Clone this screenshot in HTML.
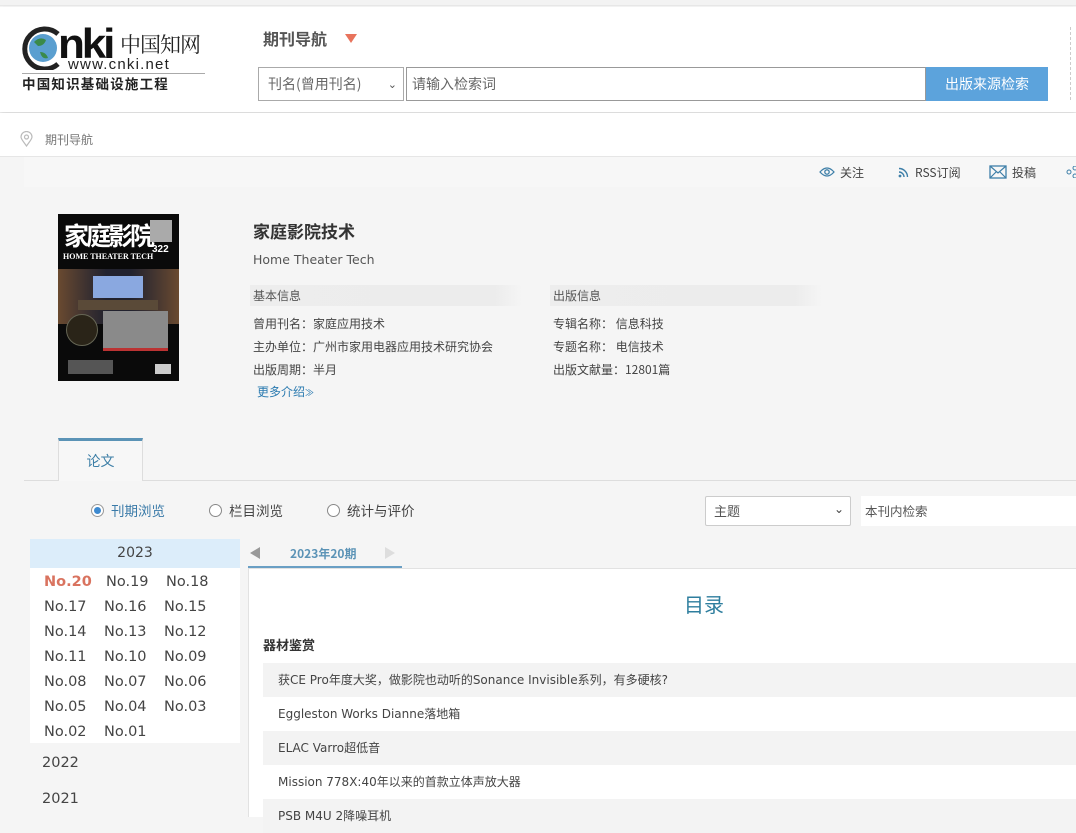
<!DOCTYPE html>
<html><head><meta charset="utf-8"><style>
*{margin:0;padding:0;box-sizing:border-box}
body{width:1076px;height:817px;overflow:hidden;background:#f5f5f5;font-family:"Liberation Sans","Noto Sans CJK SC",sans-serif;color:#333;position:relative}
.a{position:absolute;white-space:nowrap}
</style></head><body>
<!-- header -->
<div class="a" style="left:0;top:0;width:1076px;height:6px;background:#f3f3f3;border-bottom:1px solid #e8e8e8"></div>
<div class="a" style="left:0;top:7px;width:1076px;height:105px;background:#fff;box-shadow:0 3px 5px rgba(0,0,0,.12)"></div>
<!-- logo -->
<svg class="a" style="left:22px;top:26px" width="40" height="44" viewBox="0 0 40 44">
<path d="M36 8 A20 20 0 1 0 36 38" fill="none" stroke="#222" stroke-width="5"/>
<circle cx="21" cy="22" r="14" fill="#5a9fd0"/>
<path d="M12 16 q6-6 12-2 q-2 6 -8 6z M18 26 q6 0 8 6 q-6 2 -8 -6z" fill="#3a8a4a"/>
</svg>
<div class="a" style="left:58px;top:24px;font:bold 42px/40px 'Liberation Sans',sans-serif;color:#111;letter-spacing:-3px;transform:scaleX(1.05);transform-origin:left">nki</div>
<div class="a" style="left:120px;top:31px;font:21px/26px 'Noto Serif CJK SC',serif;color:#222;letter-spacing:-1px">中国知网</div>
<div class="a" style="left:68px;top:57px;font:15px/16px 'Liberation Sans',sans-serif;color:#222;letter-spacing:1.2px">www.cnki.net</div>
<div class="a" style="left:22px;top:73px;width:183px;border-top:1px solid #aaa"></div>
<div class="a" style="left:22px;top:75px;font:bold 13.5px/16px 'Noto Sans CJK SC',sans-serif;color:#222;letter-spacing:1.2px">中国知识基础设施工程</div>
<!-- nav -->
<div class="a" style="left:263px;top:27px;font:bold 16px/22px 'Noto Sans CJK SC',sans-serif;color:#555">期刊导航</div>
<div class="a" style="left:345px;top:34px;width:0;height:0;border-left:6px solid transparent;border-right:6px solid transparent;border-top:9px solid #e8735c"></div>
<div class="a" style="left:258px;top:67px;width:146px;height:34px;border:1px solid #aaa;background:#fff;font:14px/32px 'Noto Sans CJK SC',sans-serif;color:#666;padding-left:9px">刊名(曾用刊名)<span style="position:absolute;right:6px;top:0;font-size:11px;color:#555">&#8964;</span></div>
<div class="a" style="left:406px;top:67px;width:520px;height:34px;border:1px solid #999;background:#fff;font:14px/32px 'Noto Sans CJK SC',sans-serif;color:#666;padding-left:5px">请输入检索词</div>
<div class="a" style="left:926px;top:67px;width:122px;height:34px;background:#5ca3dc;font:14px/34px 'Noto Sans CJK SC',sans-serif;color:#fff;text-align:center">出版来源检索</div>
<div class="a" style="left:1070px;top:27px;height:73px;border-left:1px dashed #ccc"></div>
<!-- breadcrumb -->
<div class="a" style="left:0;top:113px;width:1076px;height:44px;background:#fff"></div>
<svg class="a" style="left:20px;top:131px" width="13" height="16" viewBox="0 0 13 16"><path d="M6.5 15 C3 10 1 8 1 6 A5.5 5.5 0 0 1 12 6 C12 8 10 10 6.5 15z" fill="none" stroke="#bbb" stroke-width="1.2"/><circle cx="6.5" cy="6" r="2" fill="none" stroke="#bbb" stroke-width="1.2"/></svg>
<div class="a" style="left:45px;top:131px;font:12px/17px 'Noto Sans CJK SC',sans-serif;color:#777">期刊导航</div>
<div class="a" style="left:0;top:156px;width:1076px;height:1px;background:#e6e6e6"></div>
<!-- toolbar -->
<div class="a" style="left:24px;top:157px;width:1052px;height:30px;background:#f7f7f7"></div>
<svg class="a" style="left:819px;top:166px" width="16" height="12" viewBox="0 0 16 12"><path d="M1 6 Q8 -2 15 6 Q8 14 1 6z" fill="none" stroke="#3e7fa8" stroke-width="1.3"/><circle cx="8" cy="6" r="2.2" fill="none" stroke="#3e7fa8" stroke-width="1.3"/></svg>
<div class="a" style="left:840px;top:164px;font:12px/17px 'Noto Sans CJK SC',sans-serif;color:#444">关注</div>
<svg class="a" style="left:898px;top:167px" width="11" height="11" viewBox="0 0 11 11"><circle cx="2" cy="9" r="1.4" fill="#3e7fa8"/><path d="M1 5 A5 5 0 0 1 6 10 M1 1.5 A8.5 8.5 0 0 1 9.5 10" fill="none" stroke="#3e7fa8" stroke-width="1.4"/></svg>
<div class="a" style="left:915px;top:164px;font:12px/17px 'Noto Sans CJK SC',sans-serif;color:#444">RSS订阅</div>
<svg class="a" style="left:989px;top:165px" width="18" height="14" viewBox="0 0 18 14"><rect x="1" y="1" width="16" height="12" fill="none" stroke="#3e7fa8" stroke-width="1.3"/><path d="M1 1 L9 8 L17 1 M1 13 L7 7 M17 13 L11 7" fill="none" stroke="#3e7fa8" stroke-width="1.2"/></svg>
<div class="a" style="left:1012px;top:164px;font:12px/17px 'Noto Sans CJK SC',sans-serif;color:#444">投稿</div>
<svg class="a" style="left:1066px;top:166px" width="10" height="12" viewBox="0 0 10 12"><circle cx="3" cy="6" r="2" fill="none" stroke="#3e7fa8"/><circle cx="9" cy="2" r="2" fill="none" stroke="#3e7fa8"/><circle cx="9" cy="10" r="2" fill="none" stroke="#3e7fa8"/></svg>
<!-- cover -->
<div class="a" style="left:58px;top:214px;width:121px;height:167px;background:#0a0a0a;overflow:hidden">
<div class="a" style="left:6px;top:7px;font:bold 25px/28px 'Noto Sans CJK SC',sans-serif;color:#fff;letter-spacing:-3px">家庭影院</div>
<div class="a" style="left:92px;top:6px;width:22px;height:22px;background:#aaa"></div>
<div class="a" style="left:94px;top:31px;font:bold 10px/10px sans-serif;color:#fff">322</div>
<div class="a" style="left:5px;top:38px;font:bold 8px/9px 'Liberation Serif',serif;color:#fff">HOME THEATER TECH</div>
<div class="a" style="left:0;top:55px;width:121px;height:55px;background:linear-gradient(90deg,#6a4a30,#3a3030 25%,#22222e 40%,#22222e 60%,#3a3030 75%,#6a4a30)"></div>
<div class="a" style="left:35px;top:62px;width:50px;height:22px;background:#8aa8e0"></div>
<div class="a" style="left:20px;top:86px;width:80px;height:10px;background:#5a4a38"></div>
<div class="a" style="left:45px;top:97px;width:65px;height:40px;background:#8a8a8a;border-bottom:3px solid #b33"></div>
<div class="a" style="left:8px;top:100px;width:32px;height:32px;border-radius:50%;background:#2a2418;border:1px solid #665"></div>
<div class="a" style="left:10px;top:146px;width:45px;height:14px;background:#555"></div>
<div class="a" style="left:97px;top:150px;width:16px;height:10px;background:#ccc"></div>
</div>
<!-- info -->
<div class="a" style="left:253px;top:219px;font:bold 17px/24px 'Noto Sans CJK SC',sans-serif;color:#333">家庭影院技术</div>
<div class="a" style="left:253px;top:251px;font:12.5px/17px 'DejaVu Sans',sans-serif;color:#555">Home Theater Tech</div>
<div class="a" style="left:250px;top:285px;width:272px;height:21px;background:linear-gradient(90deg,#ededed,#ececec 90%,#f5f5f5)"></div>
<div class="a" style="left:550px;top:285px;width:272px;height:21px;background:linear-gradient(90deg,#ededed,#ececec 90%,#f5f5f5)"></div>
<div class="a" style="left:253px;top:287px;font:12px/17px 'Noto Sans CJK SC',sans-serif;color:#555">基本信息</div>
<div class="a" style="left:553px;top:287px;font:12px/17px 'Noto Sans CJK SC',sans-serif;color:#555">出版信息</div>
<div class="a" style="left:253px;top:312px;font:12px/17px 'Noto Sans CJK SC',sans-serif;color:#444;line-height:23px">曾用刊名：家庭应用技术<br>主办单位：广州市家用电器应用技术研究协会<br>出版周期：半月</div>
<div class="a" style="left:553px;top:312px;font:12px/17px 'Noto Sans CJK SC',sans-serif;color:#444;line-height:23px">专辑名称：&nbsp;信息科技<br>专题名称：&nbsp;电信技术<br>出版文献量：12801篇</div>
<div class="a" style="left:257px;top:383px;font:12px/17px 'Noto Sans CJK SC',sans-serif;color:#2a7ab0">更多介绍<span style="font-size:9px">≫</span></div>
<!-- tab -->
<div class="a" style="left:24px;top:480px;width:1052px;height:1px;background:#ddd"></div>
<div class="a" style="left:58px;top:438px;width:85px;height:43px;background:#f7f7f7;border-top:3px solid #5b93b6;border-left:1px solid #ddd;border-right:1px solid #ddd;font:14px/40px 'Noto Sans CJK SC',sans-serif;color:#3c7ea6;text-align:center">论文</div>
<!-- radios -->
<div class="a" style="left:91px;top:504px;width:13px;height:13px;border-radius:50%;border:1px solid #999;background:#fff"><div style="margin:2px;width:7px;height:7px;border-radius:50%;background:#3e8ad0"></div></div>
<div class="a" style="left:111px;top:501px;font:13.5px/19px 'Noto Sans CJK SC',sans-serif;color:#3a7aa8">刊期浏览</div>
<div class="a" style="left:209px;top:504px;width:13px;height:13px;border-radius:50%;border:1px solid #888;background:#fff"></div>
<div class="a" style="left:229px;top:501px;font:13.5px/19px 'Noto Sans CJK SC',sans-serif;color:#444">栏目浏览</div>
<div class="a" style="left:327px;top:504px;width:13px;height:13px;border-radius:50%;border:1px solid #888;background:#fff"></div>
<div class="a" style="left:347px;top:501px;font:13.5px/19px 'Noto Sans CJK SC',sans-serif;color:#444">统计与评价</div>
<div class="a" style="left:705px;top:496px;width:146px;height:30px;border:1px solid #ccc;border-radius:2px;background:#fff;font:13px/28px 'Noto Sans CJK SC',sans-serif;color:#555;padding-left:8px">主题<span style="position:absolute;right:6px;top:-2px;font-size:12px;color:#444">&#8964;</span></div>
<div class="a" style="left:861px;top:496px;width:215px;height:30px;background:#fff;font:12.5px/30px 'Noto Sans CJK SC',sans-serif;color:#555;padding-left:4px">本刊内检索</div>
<!-- left years -->
<div class="a" style="left:30px;top:539px;width:210px;height:29px;background:#dcedfa;font:14px/29px 'DejaVu Sans',sans-serif;color:#444;text-align:center">2023</div>
<div class="a" style="left:30px;top:568px;width:210px;height:175px;background:#fff"></div>
<div class="a" style="left:44px;top:570px;font:14.5px/25px 'DejaVu Sans',sans-serif;color:#444">
<div><b style="color:#d9735f;display:inline-block;width:62px">No.20</b><span style="display:inline-block;width:60px">No.19</span>No.18</div>
<div><span style="display:inline-block;width:60px">No.17</span><span style="display:inline-block;width:60px">No.16</span>No.15</div>
<div><span style="display:inline-block;width:60px">No.14</span><span style="display:inline-block;width:60px">No.13</span>No.12</div>
<div><span style="display:inline-block;width:60px">No.11</span><span style="display:inline-block;width:60px">No.10</span>No.09</div>
<div><span style="display:inline-block;width:60px">No.08</span><span style="display:inline-block;width:60px">No.07</span>No.06</div>
<div><span style="display:inline-block;width:60px">No.05</span><span style="display:inline-block;width:60px">No.04</span>No.03</div>
<div><span style="display:inline-block;width:60px">No.02</span><span style="display:inline-block;width:60px">No.01</span></div>
</div>
<div class="a" style="left:42px;top:754px;font:14.5px/19px 'DejaVu Sans',sans-serif;color:#444">2022</div>
<div class="a" style="left:42px;top:790px;font:14.5px/19px 'DejaVu Sans',sans-serif;color:#444">2021</div>
<!-- right panel -->
<div class="a" style="left:248px;top:568px;width:828px;height:249px;background:#fff;border-top:1px solid #e2e2e2;border-left:1px solid #e2e2e2"></div>
<div class="a" style="left:248px;top:566px;width:154px;height:2px;background:#6a9fc4"></div>
<div class="a" style="left:250px;top:547px;width:0;height:0;border-top:6px solid transparent;border-bottom:6px solid transparent;border-right:10px solid #999"></div>
<div class="a" style="left:385px;top:547px;width:0;height:0;border-top:6px solid transparent;border-bottom:6px solid transparent;border-left:10px solid #ddd"></div>
<div class="a" style="left:290px;top:545px;font:bold 12px/17px 'Noto Sans CJK SC',sans-serif;color:#5b93b6">2023年20期</div>
<div class="a" style="left:684px;top:591px;font:20px/26px 'Noto Sans CJK SC',sans-serif;color:#2e7e9e">目录</div>
<div class="a" style="left:263px;top:635px;font:bold 13px/19px 'Noto Sans CJK SC',sans-serif;color:#333">器材鉴赏</div>
<div class="a" style="left:263px;top:663px;width:813px;height:34px;background:#f3f3f3"></div>
<div class="a" style="left:263px;top:731px;width:813px;height:34px;background:#f3f3f3"></div>
<div class="a" style="left:263px;top:799px;width:813px;height:34px;background:#f3f3f3"></div>
<div class="a" style="left:278px;font:12px/17px 'DejaVu Sans','Noto Sans CJK SC',sans-serif;color:#444;line-height:34px;top:663px">获CE Pro年度大奖，做影院也动听的Sonance Invisible系列，有多硬核?<br>Eggleston Works Dianne落地箱<br>ELAC Varro超低音<br>Mission 778X:40年以来的首款立体声放大器<br>PSB M4U 2降噪耳机</div>
</body></html>
